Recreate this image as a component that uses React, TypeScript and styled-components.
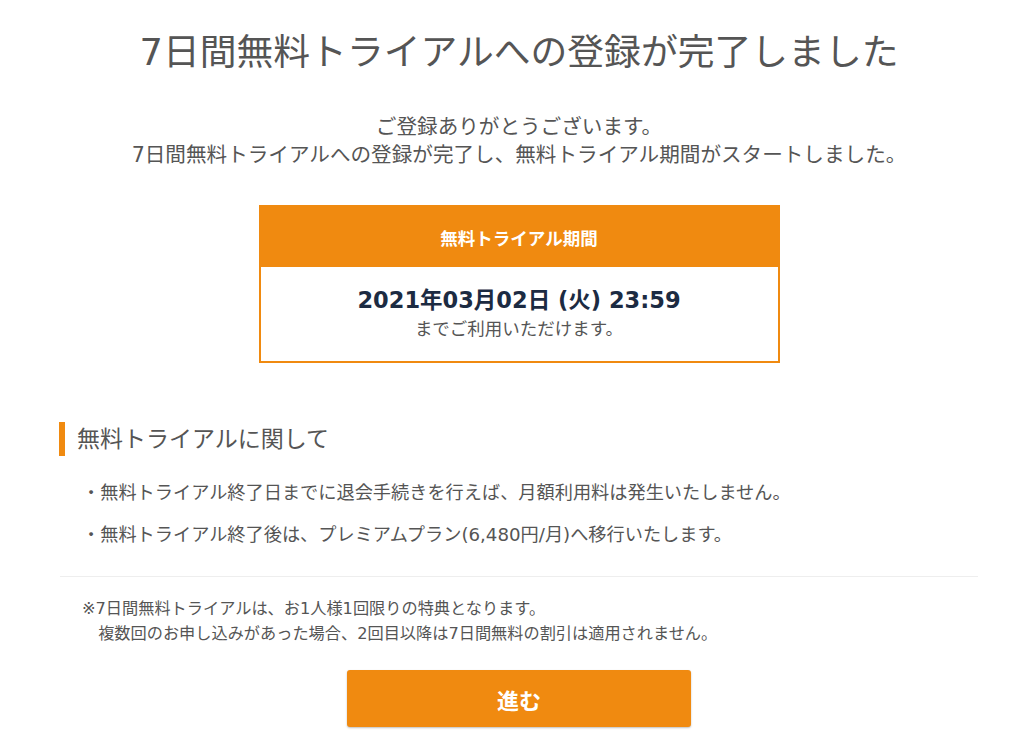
import React from 'react';
import styled, {createGlobalStyle} from "styled-components";

const ORANGE = '#f08a10';

const GlobalStyle = createGlobalStyle`
    html, body {
        margin: 0;
        padding: 0;
        background: #fff;
    }
    body {
        font-family: "DejaVu Sans", "Noto Sans CJK JP", sans-serif;
        color: #555;
    }
`

const notes = [
    '無料トライアル終了日までに退会手続きを行えば、月額利用料は発生いたしません。',
    '無料トライアル終了後は、プレミアムプラン(6,480円/月)へ移行いたします。',
]

export const App = () => {
    return (
        <Page>
            <GlobalStyle/>
            <Title>7日間無料トライアルへの登録が完了しました</Title>
            <Lead>
                ご登録ありがとうございます。<br/>
                7日間無料トライアルへの登録が完了し、無料トライアル期間がスタートしました。
            </Lead>
            <PeriodBox>
                <PeriodHeader>無料トライアル期間</PeriodHeader>
                <PeriodBody>
                    <PeriodDate>2021年03月02日 (火) 23:59</PeriodDate>
                    <PeriodNote>までご利用いただけます。</PeriodNote>
                </PeriodBody>
            </PeriodBox>
            <SectionTitle>無料トライアルに関して</SectionTitle>
            <List>
                {notes.map((e, i) => {
                    return (
                        <Item key={i}>・{e}</Item>
                    )
                })}
            </List>
            <Divider/>
            <Caution>
                ※7日間無料トライアルは、お1人様1回限りの特典となります。<br/>
                複数回のお申し込みがあった場合、2回目以降は7日間無料の割引は適用されません。
            </Caution>
            <ButtonRow>
                <NextButton type="button">進む</NextButton>
            </ButtonRow>
        </Page>
    );
};

export default App;

const Page = styled.div`
    width: 920px;
    margin-left: 59px;
    padding-top: 29px;
    padding-bottom: 20px;
`
const Title = styled.h1`
    margin: 0;
    text-align: center;
    font-size: 36.8px;
    line-height: 48px;
    font-weight: 400;
    color: #555;
`
const Lead = styled.p`
    margin: 36px 0 0;
    text-align: center;
    font-size: 20.6px;
    line-height: 28px;
    color: #555;
`
const PeriodBox = styled.div`
    width: 517px;
    margin: 36px auto 0;
    border: 2px solid ${ORANGE};
`
const PeriodHeader = styled.div`
    height: 60px;
    margin-top: -2px;
    padding-top: 2px;
    background: ${ORANGE};
    color: #fff;
    font-size: 17.5px;
    font-weight: 700;
    display: flex;
    align-items: center;
    justify-content: center;
`
const PeriodBody = styled.div`
    padding: 17px 0 20px;
    text-align: center;
`
const PeriodDate = styled.div`
    font-size: 22.5px;
    line-height: 32px;
    font-weight: 700;
    color: #1c2b42;
`
const PeriodNote = styled.div`
    margin-top: 1px;
    font-size: 17.5px;
    line-height: 24px;
    color: #555;
`
const SectionTitle = styled.h2`
    margin: 59px 0 0;
    padding-left: 12px;
    border-left: 6px solid ${ORANGE};
    font-size: 23px;
    line-height: 34px;
    font-weight: 400;
    color: #555;
`
const List = styled.ul`
    margin: 23px 0 0;
    padding: 0 0 0 23px;
    list-style: none;
`
const Item = styled.li`
    font-size: 18.2px;
    line-height: 28px;
    color: #555;

    & + & {
        margin-top: 14px;
    }
`
const Divider = styled.hr`
    margin: 27px 0 0 1px;
    width: 918px;
    border: 0;
    border-top: 1px solid #eee;
`
const Caution = styled.p`
    margin: 19px 0 0;
    padding-left: calc(23px + 1em);
    text-indent: -1em;
    font-size: 16.2px;
    line-height: 25px;
    color: #555;
`
const ButtonRow = styled.div`
    margin-top: 24px;
    display: flex;
    justify-content: center;
`
const NextButton = styled.button`
    width: 344px;
    height: 57px;
    border: 0;
    border-radius: 3px;
    background: ${ORANGE};
    box-shadow: 0 1px 2px rgba(0, 0, 0, 0.25);
    color: #fff;
    font-family: "Noto Sans CJK JP", sans-serif;
    font-size: 22px;
    font-weight: 700;
    cursor: pointer;
`
